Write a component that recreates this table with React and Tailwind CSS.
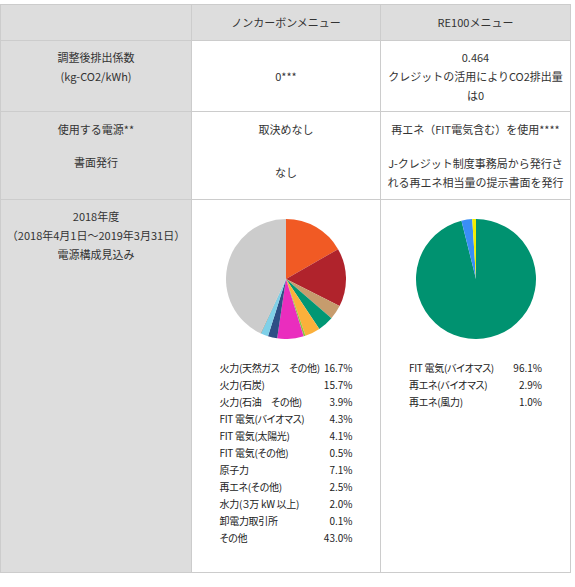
import React from 'react'

const mix1 = [
    { label: '火力(天然ガス　その他)', v: 16.7, color: '#f15a24' },
    { label: '火力(石炭)', v: 15.7, color: '#b0232c' },
    { label: '火力(石油　その他)', v: 3.9, color: '#c69c6d' },
    { label: 'FIT 電気(バイオマス)', v: 4.3, color: '#009774' },
    { label: 'FIT 電気(太陽光)', v: 4.1, color: '#fbb03b' },
    { label: 'FIT 電気(その他)', v: 0.5, color: '#8cc63f' },
    { label: '原子力', v: 7.1, color: '#ea2dbe' },
    { label: '再エネ(その他)', v: 2.5, color: '#2e4f85' },
    { label: '水力(３万 kW 以上)', v: 2.0, color: '#7fd0e8' },
    { label: '卸電力取引所', v: 0.1, color: '#8b6d4f' },
    { label: 'その他', v: 43.0, color: '#cccccc' },
]

const mix2 = [
    { label: 'FIT 電気(バイオマス)', v: 96.1, color: '#009270' },
    { label: '再エネ(バイオマス)', v: 2.9, color: '#3a8ef5' },
    { label: '再エネ(風力)', v: 1.0, color: '#f2ee00' },
]

function Pie({ data }) {
    const total = data.reduce((s, d) => s + d.v, 0)
    let a = 0
    return (
        <svg width="120" height="120" viewBox="-60 -60 120 120">
            {data.map(d => {
                const a0 = a
                a += (d.v / total) * Math.PI * 2
                const x0 = 60 * Math.sin(a0), y0 = -60 * Math.cos(a0)
                const x1 = 60 * Math.sin(a), y1 = -60 * Math.cos(a)
                const large = a - a0 > Math.PI ? 1 : 0
                return <path key={d.label} d={`M0 0 L${x0} ${y0} A60 60 0 ${large} 1 ${x1} ${y1} Z`} fill={d.color} />
            })}
        </svg>
    )
}

function Legend({ data }) {
    return (
        <div className="mt-[20px] w-[133px] text-[10px] leading-[17px] text-[#222] [font-feature-settings:'palt']">
            {data.map(d => (
                <div key={d.label} className="flex justify-between gap-x-[4px] whitespace-nowrap">
                    <span className="tracking-[-0.3px]">{d.label}</span>
                    <span>{d.v.toFixed(1)}%</span>
                </div>
            ))}
        </div>
    )
}

const head = 'bg-[#dddddd] border-r border-b border-[#cccccc]'
const side = 'bg-[#dddddd] border-r border-[#cccccc] text-center'
const cell = 'bg-white border-r border-[#cccccc] text-center'

export default function App() {
    return (
        <div className="pt-[4px] bg-white min-h-[587px] font-['Noto_Sans_CJK_JP',sans-serif]">
            <div className="w-[571px] grid grid-cols-[191px_189px_190px] grid-rows-[36px_71px_34px_54px_373px] border-l border-t border-[#cccccc] text-[11px] leading-[19px] text-[#333]">
                {/* header */}
                <div className={head}></div>
                <div className={`${head} flex items-center justify-center`}>ノンカーボンメニュー</div>
                <div className={`${head} flex items-center justify-center`}>RE100メニュー</div>

                {/* 調整後排出係数 */}
                <div className={`${side} border-b pt-[7px]`}>
                    <div>調整後排出係数</div>
                    <div>(kg-CO2/kWh)</div>
                </div>
                <div className={`${cell} border-b flex items-center justify-center`}>0***</div>
                <div className={`${cell} border-b flex flex-col items-center justify-center whitespace-nowrap`}>
                    <div>0.464</div>
                    <div>クレジットの活用によりCO2排出量</div>
                    <div>は0</div>
                </div>

                {/* 使用する電源 */}
                <div className={`${side} flex items-center justify-center`}>使用する電源**</div>
                <div className={`${cell} flex items-center justify-center`}>取決めなし</div>
                <div className={`${cell} flex items-center justify-center whitespace-nowrap`}>再エネ（FIT電気含む）を使用****</div>

                {/* 書面発行 */}
                <div className={`${side} border-b pt-[7px]`}>書面発行</div>
                <div className={`${cell} border-b flex items-center justify-center`}>なし</div>
                <div className={`${cell} border-b flex flex-col items-center justify-center whitespace-nowrap`}>
                    <div>J-クレジット制度事務局から発行さ</div>
                    <div>れる再エネ相当量の提示書面を発行</div>
                </div>

                {/* 電源構成 */}
                <div className={`${side} border-b pt-[7px]`}>
                    <div>2018年度</div>
                    <div>（2018年4月1日～2019年3月31日）</div>
                    <div>電源構成見込み</div>
                </div>
                <div className={`${cell} border-b flex flex-col items-center pt-[19px]`}>
                    <Pie data={mix1} />
                    <Legend data={mix1} />
                </div>
                <div className={`${cell} border-b flex flex-col items-center pt-[19px]`}>
                    <Pie data={mix2} />
                    <Legend data={mix2} />
                </div>
            </div>
        </div>
    )
}
